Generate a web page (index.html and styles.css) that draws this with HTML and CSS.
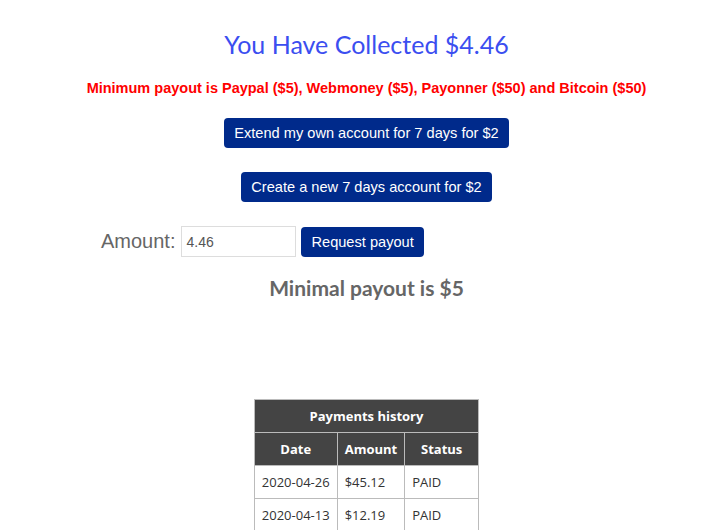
FILE: index.html
```html
<!DOCTYPE html>
<html>
    <head>
        <meta charset="utf-8">
        <title>Payout</title>
        <link rel="stylesheet" href="styles.css">
    </head>
    <body>
        <div class="page">
            <h1 class="collected">You Have Collected $4.46</h1>
            <p class="minimums">Minimum payout is Paypal ($5), Webmoney ($5), Payonner ($50) and Bitcoin ($50)</p>
            <button class="btn btn-extend">Extend my own account for 7 days for $2</button>
            <button class="btn btn-create">Create a new 7 days account for $2</button>
            <form class="payout" id="payout_form">
                <label for="amount">Amount:</label>
                <input type="text" name="amount" id="amount" value="4.46">
                <input type="submit" class="btn" value="Request payout">
            </form>
            <h2 class="minimal">Minimal payout is $5</h2>
            <table class="history">
                <tr><th colspan="3">Payments history</th></tr>
                <tr><th class="c-date">Date</th><th class="c-amount">Amount</th><th class="c-status">Status</th></tr>
                <tr><td>2020-04-26</td><td>$45.12</td><td>PAID</td></tr>
                <tr><td>2020-04-13</td><td>$12.19</td><td>PAID</td></tr>
            </table>
        </div>
    </body>
</html>
```

FILE: styles.css
```css
*{box-sizing:border-box;}
body,html{
    margin: 0;
    font-family: "Liberation Sans", Arial, sans-serif;
    background: white;
}
.page{display:flex; flex-direction:column; align-items:center; padding: 28px 0 0 24px;}
.collected{margin:0; font-family: Lato, sans-serif; font-weight:normal; font-size:25px; color:#3b4ef0; line-height:32px;}
.minimums{margin:19px 0 0; color:#ff0000; font-weight:bold; font-size:14.5px; line-height:18px;}
.btn{
    background:#002a8b; color:white; border:none; border-radius:4px;
    font-family: "Liberation Sans", Arial, sans-serif; font-size:14.6px;
    height:30px; padding:0 10px; cursor:pointer;
}
.btn-extend{margin-top:21px;}
.btn-create{margin-top:24px;}
.payout{display:flex; align-items:center; gap:5px; margin-top:24px; align-self:flex-start; margin-left:77px;}
.payout label{font-size:20px; color:#666; margin-right:1px;}
.payout input[type=text]{
    width:115px; height:31px; border:1px solid #ddd; padding:0 4px;
    font-family: "Liberation Sans", Arial, sans-serif; font-size:14px; color:#555;
}
.minimal{margin:18px 0 0; font-family: Lato, sans-serif; font-weight:bold; font-size:21px; color:#666; line-height:26px;}
.history{
    margin-top:98px; border-collapse:collapse;
    font-family: "Open Sans", sans-serif; font-size:13px; color:#333;
}
.history th,.history td{border:1px solid #bbb; height:33px; padding:0 7px; white-space:nowrap;}
.history th{background:#444; color:white; font-weight:bold; text-align:center;}
.history td{text-align:left;}
.c-date{width:82px;}
.c-amount{width:65px;}
.c-status{width:74px;}
```
